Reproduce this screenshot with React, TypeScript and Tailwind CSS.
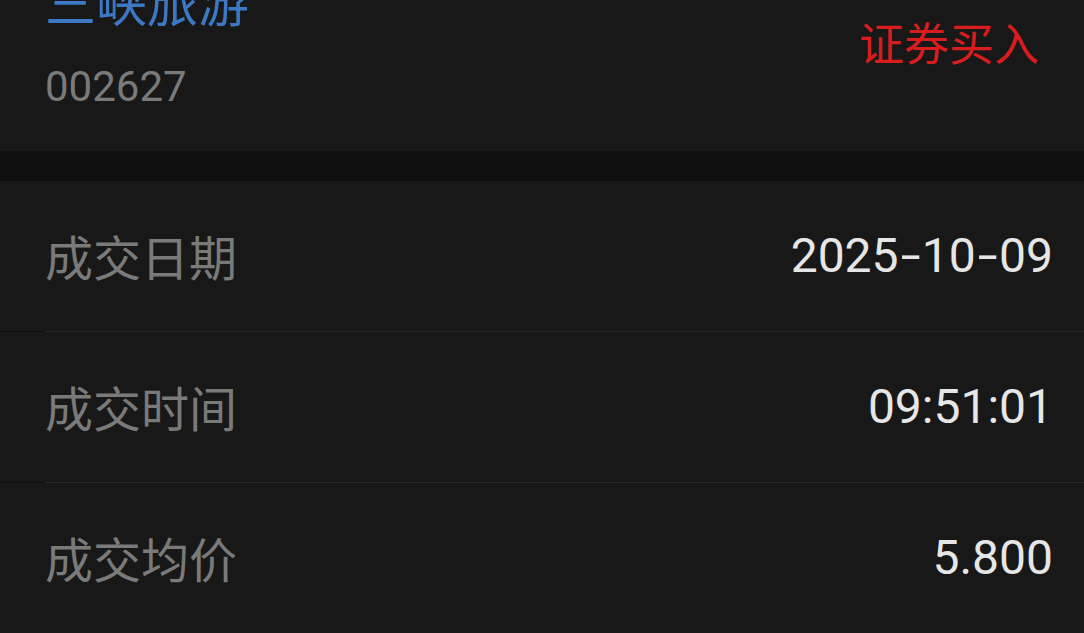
const rows = [
  { label: "成交日期", value: "2025-10-09" },
  { label: "成交时间", value: "09:51:01" },
  { label: "成交均价", value: "5.800" },
];

const cjk = "font-['Noto_Sans_CJK_SC',sans-serif]";
const num = "font-['Roboto','Noto_Sans_CJK_SC',sans-serif]";

function Value({ text }: { text: string }) {
  // the app's font draws wide dashes, pad them out a bit
  const parts = text.split("-");
  return (
    <span className={`${num} text-[48px] leading-none text-[#e6e6e6]`}>
      {parts.map((p, i) => (
        <span key={i}>
          {i > 0 && <span className="inline-block mx-[5px] scale-x-150">-</span>}
          {p}
        </span>
      ))}
    </span>
  );
}

export default function App() {
  return (
    <div className="w-[1084px] h-[633px] overflow-hidden bg-[#181818]">
      {/* header */}
      <div className="h-[151px] flex justify-between">
        <div className="pl-[45px]">
          <div className={`${cjk} text-[51px] leading-none h-[51px] -mt-[25px] text-[#3c79c4]`}>
            三峡旅游
          </div>
          <div className={`${num} text-[42px] leading-none mt-[40px] text-[#7a7a7a]`}>
            002627
          </div>
        </div>
        <div className={`${cjk} pr-[45px] pt-[19px] text-[45px] leading-none text-[#d71d1d]`}>
          证券买入
        </div>
      </div>

      <div className="h-[30px] bg-[#0f0f0f]" />

      {rows.map((row, i) => (
        <div key={row.label}>
          {i > 0 && (
            <div className="flex h-px">
              <div className="w-[45px] bg-[#0f0f0f]" />
              <div className="flex-1 bg-[#2a2a2a]" />
            </div>
          )}
          <div className="h-[150px] flex items-center justify-between pl-[45px] pr-[31px]">
            <span className={`${cjk} text-[48px] leading-none text-[#7a7a7a] -mt-[3px]`}>
              {row.label}
            </span>
            <Value text={row.value} />
          </div>
        </div>
      ))}
    </div>
  );
}
